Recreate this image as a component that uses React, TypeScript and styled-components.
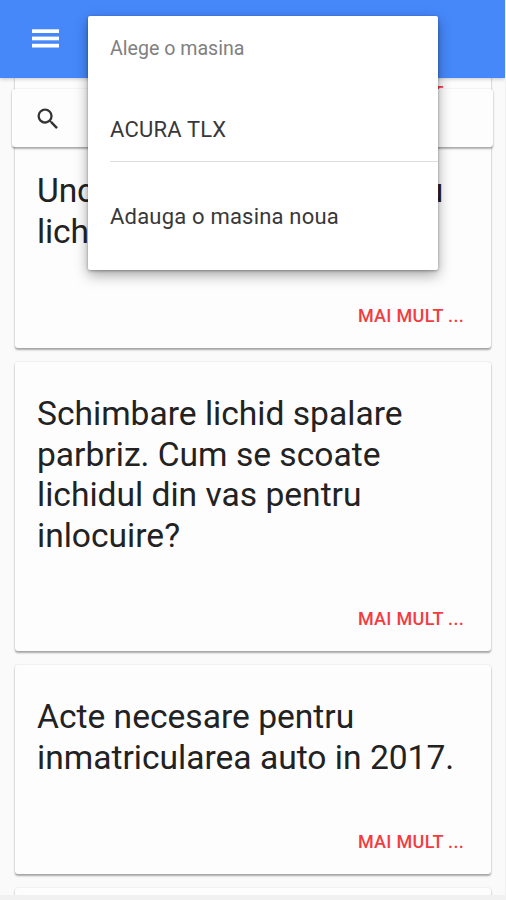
import React from "react";
import styled, { createGlobalStyle } from "styled-components";

const GlobalStyle = createGlobalStyle`
  * { box-sizing: border-box; }
  body { margin: 0; background: #f1f1f1; font-family: Roboto, sans-serif; }
`;

const Screen = styled.div`
  position: relative;
  display: flex;
  flex-direction: column;
  width: 504.5px;
  height: 895px;
  overflow: hidden;
  background: #fafafa;
`;

const Header = styled.header`
  position: relative;
  z-index: 1;
  flex: none;
  display: flex;
  align-items: center;
  height: 78px;
  padding: 0 32px;
  background: #4688fa;
  box-shadow: 0 1px 4px rgba(0, 0, 0, 0.22);
`;

const MenuIcon = styled.svg`
  display: block;
  width: 27px;
  height: 20px;
  fill: #fff;
`;

const CardList = styled.main`
  display: flex;
  flex-direction: column;
  gap: 14px;
  margin-top: 61px;
  padding: 0 13.5px 0 15px;
`;

const Card = styled.article<{ $height: number }>`
  flex: none;
  display: flex;
  flex-direction: column;
  justify-content: space-between;
  height: ${({ $height }) => $height}px;
  padding: 32.4px 27px 20.5px 22px;
  border-radius: 3px;
  background: #fdfdfd;
  box-shadow: 0 2px 2px rgba(0, 0, 0, 0.32), 0 0 2px rgba(0, 0, 0, 0.14);
`;

const ScrolledCard = styled(Card)`
  margin-top: -223px;
`;

const Title = styled.h2<{ $tracking?: number }>`
  margin: 0;
  font-size: 33.6px;
  font-weight: 400;
  line-height: 40.4px;
  letter-spacing: ${({ $tracking = 0 }) => $tracking}px;
  color: #222;
  white-space: pre-line;
`;

const MoreButton = styled.button`
  align-self: flex-end;
  padding: 0;
  border: 0;
  background: none;
  font: 500 18px/24px Roboto, sans-serif;
  letter-spacing: 0.3px;
  color: #f23c40;
`;

const SearchBar = styled.div`
  position: absolute;
  z-index: 2;
  top: 89px;
  left: 12px;
  right: 11.5px;
  height: 58px;
  display: flex;
  align-items: center;
  padding: 1px 0 0 22px;
  border-radius: 3px;
  background: #fdfdfd;
  box-shadow: 0 2px 2px rgba(0, 0, 0, 0.3), 0 0 2px rgba(0, 0, 0, 0.14);
`;

const SearchIcon = styled.svg`
  width: 28px;
  height: 28px;
  fill: #333;
`;

const Menu = styled.div`
  position: absolute;
  z-index: 3;
  top: 16px;
  left: 88px;
  width: 350px;
  height: 254px;
  display: flex;
  flex-direction: column;
  padding-left: 22px;
  border-radius: 2px;
  background: #fff;
  box-shadow: 0 5px 14px rgba(0, 0, 0, 0.35), 0 1px 3px rgba(0, 0, 0, 0.32);
`;

const MenuLabel = styled.div`
  height: 65px;
  font-size: 19.6px;
  line-height: 65px;
  color: #808080;
`;

const MenuItem = styled.div<{ $height: number; $divided?: boolean }>`
  height: ${({ $height }) => $height}px;
  display: flex;
  align-items: center;
  border-bottom: ${({ $divided }) => ($divided ? "1px solid #dedede" : "0")};
  padding-top: ${({ $divided }) => ($divided ? "16px" : "1px")};
  font-size: 22px;
  letter-spacing: 0.2px;
  color: #383838;
`;

const articles = [
  { title: "Unde este rezervorul pentru\nlichid parbriz?", height: 209, tracking: -0.14 },
  {
    title: "Schimbare lichid spalare\nparbriz. Cum se scoate\nlichidul din vas pentru\ninlocuire?",
    height: 289,
  },
  { title: "Acte necesare pentru\ninmatricularea auto in 2017.", height: 209 },
];

export default function App() {
  return (
    <>
      <GlobalStyle />
      <Screen>
        <Header>
          <MenuIcon viewBox="0 0 27 20">
            <rect y="0.3" width="27" height="3.7" />
            <rect y="7.6" width="27" height="3.7" />
            <rect y="14.8" width="27" height="3.7" />
          </MenuIcon>
        </Header>
        <SearchBar>
          <SearchIcon viewBox="0 0 24 24">
            <path d="M15.5 14h-.79l-.28-.27A6.471 6.471 0 0 0 16 9.5 6.5 6.5 0 1 0 9.5 16c1.61 0 3.09-.59 4.23-1.57l.27.28v.79l5 4.99L20.49 19l-4.99-5zm-6 0C7.01 14 5 11.99 5 9.5S7.01 5 9.5 5 14 7.01 14 9.5 11.99 14 9.5 14z" />
          </SearchIcon>
        </SearchBar>
        <CardList>
          <ScrolledCard $height={209}>
            <Title />
            <MoreButton>MAI MULT ...</MoreButton>
          </ScrolledCard>
          {articles.map((article) => (
            <Card key={article.title} $height={article.height}>
              <Title $tracking={article.tracking}>{article.title}</Title>
              <MoreButton>MAI MULT ...</MoreButton>
            </Card>
          ))}
          <Card $height={209} />
        </CardList>
        <Menu>
          <MenuLabel>Alege o masina</MenuLabel>
          <MenuItem $height={81} $divided>ACURA TLX</MenuItem>
          <MenuItem $height={108}>Adauga o masina noua</MenuItem>
        </Menu>
      </Screen>
    </>
  );
}
